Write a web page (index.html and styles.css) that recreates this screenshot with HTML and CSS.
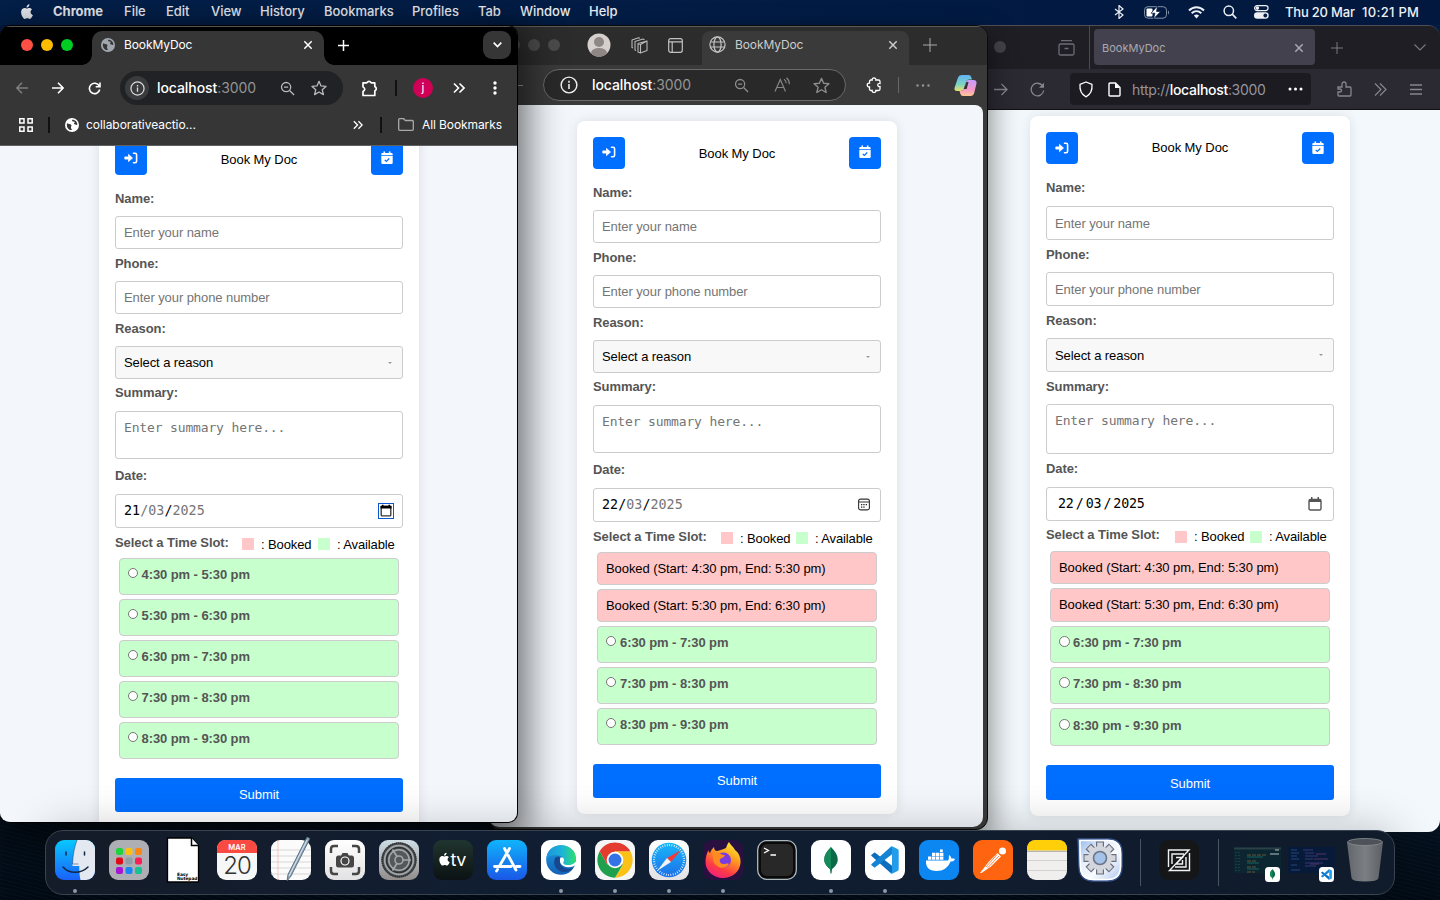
FILE: index.html
```html
<!DOCTYPE html>
<html lang="en">
<head>
<meta charset="utf-8">
<title>BookMyDoc</title>
<link rel="stylesheet" href="styles.css">
</head>
<body>
<svg class="defs" width="0" height="0">
  <defs>
    <linearGradient id="gFinder" x1="0" y1="0" x2="0" y2="1"><stop offset="0" stop-color="#08c8fd"/><stop offset="1" stop-color="#1a62fa"/></linearGradient>
    <linearGradient id="gStore" x1="0" y1="0" x2="0" y2="1"><stop offset="0" stop-color="#10b4fc"/><stop offset="1" stop-color="#1a57e6"/></linearGradient>
    <linearGradient id="gWhite" x1="0" y1="0" x2="0" y2="1"><stop offset="0" stop-color="#fff"/><stop offset="1" stop-color="#e2e2e4"/></linearGradient>
    <linearGradient id="gSettings" x1="0" y1="0" x2="0" y2="1"><stop offset="0" stop-color="#cfdde6"/><stop offset="1" stop-color="#918d8b"/></linearGradient>
    <linearGradient id="gSafari" x1="0" y1="0" x2="0" y2="1"><stop offset="0" stop-color="#19b7fa"/><stop offset="1" stop-color="#1c6fe8"/></linearGradient>
    <linearGradient id="gEdge" x1="0" y1="0" x2="1" y2="0"><stop offset="0" stop-color="#1c93dc"/><stop offset=".55" stop-color="#1db5d6"/><stop offset="1" stop-color="#2fe06a"/></linearGradient>
    <linearGradient id="gEdge2" x1="0" y1="0" x2="0" y2="1"><stop offset="0" stop-color="#1b9de0"/><stop offset="1" stop-color="#1560b8"/></linearGradient>
    <linearGradient id="gFox" x1=".8" y1="0" x2=".3" y2="1"><stop offset="0" stop-color="#fff036"/><stop offset=".4" stop-color="#ff9a1f"/><stop offset=".75" stop-color="#ff3a47"/><stop offset="1" stop-color="#f0207c"/></linearGradient>
    <linearGradient id="gTv" x1="0" y1="0" x2="0" y2="1"><stop offset="0" stop-color="#21352f"/><stop offset="1" stop-color="#0b1213"/></linearGradient>
    <linearGradient id="gTrash" x1="0" y1="0" x2="1" y2="0"><stop offset="0" stop-color="#63676c"/><stop offset=".5" stop-color="#7b7f83"/><stop offset="1" stop-color="#5c6065"/></linearGradient>
    <linearGradient id="gCopA" x1="0" y1="0" x2="0" y2="1"><stop offset="0" stop-color="#62b4f5"/><stop offset=".6" stop-color="#7dd6c0"/><stop offset="1" stop-color="#ecdf6a"/></linearGradient>
    <linearGradient id="gCopB" x1="0" y1="0" x2="0" y2="1"><stop offset="0" stop-color="#c79cff"/><stop offset=".6" stop-color="#f59ac9"/><stop offset="1" stop-color="#ffc794"/></linearGradient>
    <linearGradient id="gGear" x1="0" y1="0" x2="1" y2="1"><stop offset="0" stop-color="#8fb4ea"/><stop offset=".35" stop-color="#e8f0fc"/><stop offset=".6" stop-color="#f8fbff"/><stop offset="1" stop-color="#a9c2ee"/></linearGradient>
  </defs>
  <symbol id="apple" viewBox="0 0 14 17"><path fill="currentColor" d="M11.6 9c0-1.700 1.400-2.500 1.500-2.600-.8-1.200-2.100-1.400-2.500-1.400-1.100-.1-2.100.6-2.600.6-.6 0-1.400-.6-2.300-.6C4.500 5 3.400 5.700 2.800 6.800c-1.300 2.200-.3 5.500.9 7.300.6.9 1.300 1.900 2.300 1.800.9 0 1.300-.6 2.400-.6s1.400.6 2.400.6 1.600-.9 2.200-1.800c.7-1 1-2 1-2-.1-.1-2.400-.9-2.400-3.100zM9.800 3.600c.5-.6.8-1.400.7-2.300-.7 0-1.600.5-2.100 1.100-.5.5-.9 1.400-.8 2.200.8.1 1.700-.4 2.200-1z" transform="translate(-1.100 0)"/></symbol>
  <symbol id="x" viewBox="0 0 10 10"><path d="M1.300 1.300l7.400 7.400M8.700 1.300L1.300 8.700" stroke="currentColor" stroke-width="1.500" fill="none"/></symbol>
  <symbol id="plus" viewBox="0 0 14 14"><path d="M7 0v14M0 7h14" stroke="currentColor" fill="none"/></symbol>
  <symbol id="globe" viewBox="0 0 14 14"><circle cx="7" cy="7" r="7" fill="currentColor"/><path class="land" d="M2 5.200C3.500 6 5.400 5.600 6.300 7c.7 1.200-.6 1.500-.3 2.900.1.700.9.700.8 2.200C3.600 12.300 1.200 9.400 2 5.200zM7.200 1.700c-.5 1.500.4 1.700 1.700 1.700 1.100 0 .8 1.400.2 1.900-.5.500.3 1.400 1.300 1.200.7-.1.900.6 1.900.5C12.500 4.200 10.500 1.600 7.200 1.700z"/></symbol>
  <symbol id="dbl" viewBox="0 0 12 12"><path d="M1 1.500L5.500 6 1 10.500M6.500 1.500L11 6l-4.500 4.500" stroke="currentColor" stroke-width="1.600" fill="none"/></symbol>
  <symbol id="info" viewBox="0 0 16 16"><circle cx="8" cy="8" r="7" fill="none" stroke="currentColor" stroke-width="1.300"/><path d="M8 7v4.500M8 4.300v1.600" stroke="currentColor" stroke-width="1.400"/></symbol>
  <symbol id="zoomout" viewBox="0 0 16 16"><circle cx="6.500" cy="6.500" r="4.900" fill="none" stroke="currentColor" stroke-width="1.400"/><path d="M10.200 10.200L15 15M4.300 6.500h4.400" stroke="currentColor" stroke-width="1.400"/></symbol>
  <symbol id="star" viewBox="0 0 16 16"><path d="M8 1.300l2 4.600 5 .5-3.800 3.300 1.200 4.900L8 12l-4.400 2.600 1.200-4.900L1 6.400l5-.5z" fill="none" stroke="currentColor" stroke-width="1.300" stroke-linejoin="round"/></symbol>
  <symbol id="login" viewBox="0 0 14 12"><path fill="#fff" stroke="#fff" stroke-width=".8" stroke-linejoin="round" d="M.8 4.900h3.700V2.400L8.500 6 4.500 9.600V7.100H.8z"/><path d="M9.500 1.200h1.600Q12.600 1.200 12.600 2.700v6.600Q12.600 10.800 11.100 10.800H9.500" stroke="#fff" stroke-width="1.600" stroke-linecap="round" fill="none"/></symbol>
  <symbol id="calcheck" viewBox="0 0 12 14"><path fill="#fff" d="M2.500.5h1.600V2h3.800V.5h1.600V2h1Q11.700 2 11.700 3.200v1H.3v-1Q.3 2 1.500 2h1zM.3 5h11.400v6.800q0 1.200-1.200 1.200h-9Q.3 13 .3 11.800z"/><path d="M3.700 8.900l1.600 1.600 3-3" stroke="#006eff" stroke-width="1.200" fill="none"/></symbol>
  <symbol id="leaf" viewBox="0 0 16 28"><path fill="#0a6b48" d="M8 0c4.500 4.500 7 8.500 7 13 0 4.500-3 7.500-6 10l-.5 4.500h-1L7 23C4 20.500 1 17.500 1 13 1 8.500 3.500 4.500 8 0z"/><path fill="#178a5c" d="M8 0v23C4 20.500 1 17.500 1 13 1 8.500 3.500 4.500 8 0z"/></symbol>
  <symbol id="vs" viewBox="0 0 28 28"><path fill="#0c6fbe" d="M.6 8.700L3 6.800q.6-.4 1.200 0L21 19.700v7.800q-1 0-1.700-.8L.6 10.100q-.8-.7 0-1.400z"/><path fill="#1383d3" d="M.6 19.300L3 21.200q.6.400 1.200 0L21 8.300V.5q-1 0-1.700.8L.6 17.900q-.8.700 0 1.400z"/><path fill="#239cec" d="M19.300 1.300Q20.200.100 21.600.6l5 2.400q1.100.6 1.100 1.800v18.400q0 1.200-1.100 1.800l-5 2.400q-1.400.5-2.300-.7.900.5 1.700-.9V2.200q-.8-1.400-1.700-.9z"/></symbol>
</svg>

<div class="desktop">
  <header class="menubar">
    <div class="menus">
      <svg class="apple" width="14" height="17"><use href="#apple"/></svg>
      <b>Chrome</b><span>File</span><span>Edit</span><span>View</span><span>History</span><span>Bookmarks</span><span>Profiles</span><span>Tab</span><span>Window</span><span>Help</span>
    </div>
    <div class="status">
      <svg width="10" height="14" viewBox="0 0 10 14"><path d="M1 4l8 6-4 3.500V.5L9 4l-8 6" fill="none" stroke="currentColor" stroke-width="1.200"/></svg>
      <svg width="26" height="13" viewBox="0 0 26 13"><rect x=".5" y=".7" width="22" height="11.500" rx="3.500" fill="none" stroke="#8291a8"/><path d="M24 4.500c1.400.5 1.400 3.500 0 4z" fill="#8291a8"/><rect x="2.500" y="2.500" width="6" height="8" rx="1" fill="#fff"/><path d="M13.500 0L7 7.200h4L9.500 13l7-7.500h-4z" fill="#fff" stroke="#021b43" stroke-width=".7"/></svg>
      <svg width="17" height="13" viewBox="0 0 17 13"><path d="M1 4.500c4.300-4.300 10.700-4.300 15 0M3.700 7.300c2.800-2.700 6.800-2.700 9.600 0" fill="none" stroke="currentColor" stroke-width="2"/><path d="M5.900 9.400c1.500-1.300 3.700-1.300 5.200 0L8.500 12.500z" fill="currentColor"/></svg>
      <svg width="14" height="14" viewBox="0 0 14 14"><circle cx="5.800" cy="5.800" r="4.700" fill="none" stroke="currentColor" stroke-width="1.500"/><path d="M9.200 9.200L13.300 13.300" stroke="currentColor" stroke-width="1.700"/></svg>
      <svg width="15" height="14" viewBox="0 0 15 14"><rect x=".6" y=".6" width="13.500" height="5" rx="2.500" fill="none" stroke="currentColor" stroke-width="1.200"/><circle cx="3.400" cy="3.100" r="1.800" fill="currentColor"/><rect x="0" y="7.300" width="14.700" height="6.500" rx="3.200" fill="currentColor"/><circle cx="11.300" cy="10.500" r="1.900" fill="#0a1f45"/></svg>
      <span class="day">Thu 20 Mar</span><span class="time">10:21 PM</span>
    </div>
  </header>

  <!-- Firefox -->
  <section class="window firefox">
    <div class="ff-tabs">
      <span class="light"></span>
      <svg class="ff-archive" width="17" height="16" viewBox="0 0 17 16"><path d="M3 .7h11M2.500 4h12Q16 4 16 5.500v8q0 1.500-1.500 1.500h-12Q1 15 1 13.500v-8Q1 4 2.500 4zM6.500 8.500h4" fill="none" stroke="#6e6b76" stroke-width="1.300"/></svg>
      <div class="ff-tab"><span>BookMyDoc</span><svg width="10" height="10"><use href="#x"/></svg></div>
      <svg class="ff-plus" width="12" height="12"><use href="#plus"/></svg>
      <svg class="ff-chev" width="12" height="7" viewBox="0 0 12 7"><path d="M.5.500L6 6 11.500.500" fill="none" stroke="#77747f" stroke-width="1.200"/></svg>
    </div>
    <div class="ff-bar">
      <svg class="ff-fwd" width="14" height="13" viewBox="0 0 14 13"><path d="M0 6.500h13M7.500 1L13 6.500 7.500 12" fill="none" stroke="currentColor" stroke-width="1.300"/></svg>
      <svg class="ff-reload" width="15" height="15" viewBox="0 0 15 15"><path d="M12.700 4A6.300 6.300 0 1 0 13.700 8.500" fill="none" stroke="currentColor" stroke-width="1.300"/><path d="M14 .8v5H9z" fill="currentColor"/></svg>
      <div class="ff-url">
        <svg width="16" height="17" viewBox="0 0 16 17"><path d="M8 1l6 2.300c.5 6-1.500 10.200-6 12.500C3.500 13.500 1.500 9.300 2 3.300z" fill="none" stroke="#fff" stroke-width="1.300" stroke-linejoin="round"/></svg>
        <svg class="ff-page" width="13" height="15" viewBox="0 0 13 15"><path d="M1 2Q1 1 2 1h5.500L12 5.500V13q0 1-1 1H2q-1 0-1-1z" fill="none" stroke="#fff" stroke-width="1.400"/><path d="M7 1v5h5z" fill="#fff"/></svg>
        <span class="ff-addr">http://<b>localhost</b>:3000</span>
        <svg width="15" height="4" viewBox="0 0 15 4"><path d="M2 2h.01M7.500 2h.01M13 2h.01" stroke="#fff" stroke-width="3" stroke-linecap="round"/></svg>
      </div>
      <svg class="ff-ext" width="15" height="16" viewBox="0 0 15 16"><path d="M2 15q-1 0-1-1v-3h2c2 0 2-3 0-3H1V6h4V3c0-2.700 4-2.700 4 0v3h4q1 0 1 1v7q0 1-1 1z" fill="none" stroke="currentColor" stroke-width="1.300"/></svg>
      <svg class="ff-more" width="13" height="13" viewBox="0 0 13 13"><path d="M1 .500l6 6-6 6M6 .500l6 6-6 6" fill="none" stroke="currentColor" stroke-width="1.200"/></svg>
      <svg class="ff-menu" width="12" height="11" viewBox="0 0 12 11"><path d="M0 1h12M0 5.500h12M0 10h12" stroke="currentColor" stroke-width="1.300"/></svg>
    </div>
    <main class="page">
      <form class="card">
        <div class="head"><span class="btn"><svg width="14" height="12"><use href="#login"/></svg></span><span class="title">Book My Doc</span><span class="btn"><svg width="12" height="14"><use href="#calcheck"/></svg></span></div>
        <label class="first">Name:</label><div class="field">Enter your name</div>
        <label>Phone:</label><div class="field">Enter your phone number</div>
        <label>Reason:</label><div class="field select"><span>Select a reason</span><i></i></div>
        <label>Summary:</label><div class="field area">Enter summary here...</div>
        <label class="dlabel">Date:</label><div class="field date"><span><b>22</b><b>/</b><b>03</b><b>/</b><b>2025</b></span><svg width="14" height="14" viewBox="0 0 14 14"><path d="M2.500 2.500h9q1.500 0 1.500 1.500v7.500q0 1.500-1.500 1.500h-9Q1 13 1 11.500V4q0-1.500 1.500-1.500z" fill="none" stroke="#555" stroke-width="1.400"/><path d="M1 2.500h12v2.500H1zM3 0h1.500v3H3zM9.500 0H11v3H9.500z" fill="#555"/></svg></div>
        <div class="legend"><strong>Select a Time Slot:</strong><i class="red"></i><span class="lb">: Booked</span><i class="green"></i><span>: Available</span></div>
        <div class="slots"><div class="slot booked">Booked (Start: 4:30 pm, End: 5:30 pm)</div><div class="slot booked">Booked (Start: 5:30 pm, End: 6:30 pm)</div><div class="slot"><i></i>6:30 pm - 7:30 pm</div><div class="slot"><i></i>7:30 pm - 8:30 pm</div><div class="slot last"><i></i>8:30 pm - 9:30 pm</div></div>
        <div class="submit">Submit</div>
      </form>
    </main>
  </section>

  <!-- Edge -->
  <section class="window edge">
    <div class="ed-tabs">
      <span class="light"></span><span class="light"></span><span class="light"></span>
      <svg class="ed-user" width="24" height="24" viewBox="0 0 24 24"><clipPath id="uc"><circle cx="12" cy="12" r="11.500"/></clipPath><g clip-path="url(#uc)"><rect width="24" height="24" fill="#d5d0cd"/><circle cx="12" cy="9" r="5" fill="#8e8783"/><ellipse cx="12" cy="20" rx="8" ry="5" fill="#8e8783"/></g></svg>
      <svg class="ed-coll" width="17" height="17" viewBox="0 0 17 17"><path d="M7 6.500l9-2.500v9.500L9.500 16 7 15zM7 6.500l2.500 1L16 4M9.500 7.500V16M5 13.500l-1-.5V4.500l8-2.500 1.500.8M2 11l-1-.5V3L7.500.700 9 1.200" fill="none" stroke="#b8b8b8" stroke-width="1.100" stroke-linejoin="round"/></svg>
      <svg class="ed-side" width="15" height="15" viewBox="0 0 15 15"><rect x=".7" y=".7" width="13.600" height="13.600" rx="2" fill="none" stroke="#c2c2c2" stroke-width="1.200"/><path d="M.7 3.800h13.600M4.200 3.800v10.500" stroke="#c2c2c2" stroke-width="1.200"/></svg>
      <div class="ed-tab">
        <svg width="17" height="17" viewBox="0 0 17 17"><g fill="none" stroke="#c4c4c4" stroke-width="1.200"><circle cx="8.500" cy="8.500" r="7.600"/><ellipse cx="8.500" cy="8.500" rx="3.600" ry="7.600"/><path d="M1.500 6h14M1.500 11h14"/></g></svg>
        <span>BookMyDoc</span><svg width="10" height="10"><use href="#x"/></svg>
      </div>
      <svg class="ed-plus" width="14" height="14"><use href="#plus"/></svg>
    </div>
    <div class="ed-bar">
      <i class="ed-arrow"></i>
      <div class="ed-url">
        <svg width="18" height="18"><use href="#info"/></svg>
        <span class="addr"><b>localhost</b>:3000</span>
        <svg class="ez" width="15" height="15"><use href="#zoomout"/></svg>
        <svg width="17" height="16" viewBox="0 0 17 16"><path d="M1 14.500L6.300 2.500l5.200 12M3 10.500h6.700M10 2.200c1.600 1 2.200 2.300 2.200 4M12.500.7c2 1.700 2.900 3.700 2.800 6.500" fill="none" stroke="#858585" stroke-width="1.200"/></svg>
        <svg width="17" height="17"><use href="#star"/></svg>
      </div>
      <svg class="ed-ext" width="16" height="16" viewBox="0 0 16 16"><path d="M4 3h2.200c-.6-2.800 4.200-2.800 3.600 0H12.500q1.500 0 1.500 1.500V6.500c-3-.6-3 3.600 0 3v2.500q0 1.500-1.500 1.500H9.800c.6 2.600-4.200 2.600-3.600 0H5Q3.500 13.500 3.500 12V9.800c-3 .6-3-4.200 0-3.600V4.500Q3.500 3 5 3z" fill="none" stroke="#fff" stroke-width="1.300"/></svg>
      <i class="ed-sep"></i>
      <svg class="ed-dots" width="14" height="3" viewBox="0 0 14 3"><path d="M1.500 1.500h.01M7 1.500h.01M12.500 1.500h.01" stroke="#939393" stroke-width="2.500" stroke-linecap="round"/></svg>
      <svg class="ed-cop" width="23" height="21" viewBox="0 0 23 21"><path fill="url(#gCopA)" d="M4 2.500Q4.800 0 7.500 0h7Q16.700 0 17.300 2.200l.7 2.300H15q-2.300 0-3 2.300L10 13.500Q9 16 6.500 16H3Q0 16 .5 13z"/><path fill="url(#gCopB)" d="M14 5h5.500q3.500 0 3 3.500l-2.300 9.500q-.9 3-3.700 3H9Q7 21 6.300 18.800L5.500 16h1q2.500 0 3.400-2.500L12 7q.6-2 2-2z"/><path fill="#343434" d="M12.500 7h2l-1.800 7H9.700z"/></svg>
    </div>
    <main class="page">
      <form class="card">
        <div class="head"><span class="btn"><svg width="14" height="12"><use href="#login"/></svg></span><span class="title">Book My Doc</span><span class="btn"><svg width="12" height="14"><use href="#calcheck"/></svg></span></div>
        <label class="first">Name:</label><div class="field">Enter your name</div>
        <label>Phone:</label><div class="field">Enter your phone number</div>
        <label>Reason:</label><div class="field select"><span>Select a reason</span><i></i></div>
        <label class="sum">Summary:</label><div class="field area">Enter summary here...</div>
        <label class="dlabel">Date:</label><div class="field date"><span><b>22/</b>03<b>/</b>2025</span><svg width="16" height="16" viewBox="0 0 16 16"><rect x="2.600" y="2.100" width="10.800" height="10.800" rx="2" fill="none" stroke="#333" stroke-width="1.100"/><path d="M2.600 5h10.800" stroke="#333"/><path d="M5 7.700h1.300M7.300 7.700h1.300M9.700 7.700H11M5 10.200h1.300M7.300 10.200h1.300" stroke="#222" stroke-width="1.200"/></svg></div>
        <div class="legend"><strong>Select a Time Slot:</strong><i class="red"></i><span class="lb">: Booked</span><i class="green"></i><span>: Available</span></div>
        <div class="slots"><div class="slot booked">Booked (Start: 4:30 pm, End: 5:30 pm)</div><div class="slot booked">Booked (Start: 5:30 pm, End: 6:30 pm)</div><div class="slot"><i></i>6:30 pm - 7:30 pm</div><div class="slot"><i></i>7:30 pm - 8:30 pm</div><div class="slot"><i></i>8:30 pm - 9:30 pm</div></div>
        <div class="submit">Submit</div>
      </form>
    </main>
  </section>

  <!-- Chrome -->
  <section class="window chrome">
    <div class="ch-tabs">
      <span class="light r"></span><span class="light y"></span><span class="light g"></span>
      <div class="ch-tab"><svg class="fav" width="14" height="14"><use href="#globe"/></svg><span>BookMyDoc</span><svg width="10" height="10"><use href="#x"/></svg></div>
      <svg class="ch-plus" width="11" height="11" viewBox="0 0 11 11"><path d="M5.500 0v11M0 5.500h11" stroke="#fff" stroke-width="1.500"/></svg>
      <span class="ch-drop"><svg width="9" height="6" viewBox="0 0 9 6"><path d="M.7.700l3.800 3.800L8.300.700" fill="none" stroke="#fff" stroke-width="1.700"/></svg></span>
    </div>
    <div class="ch-bar">
      <span class="cell"><svg class="dim" width="12" height="12" viewBox="0 0 12 12"><path d="M12 6H1M6 .800L.900 6 6 11.200" fill="none" stroke="currentColor" stroke-width="1.500"/></svg></span>
      <span class="cell"><svg width="12" height="12" viewBox="0 0 12 12"><path d="M0 6h11M6 .800L11.100 6 6 11.200" fill="none" stroke="currentColor" stroke-width="1.600"/></svg></span>
      <span class="cell"><svg width="13" height="13" viewBox="0 0 13 13"><path d="M11.200 4A5.200 5.200 0 1 0 11.700 7.500M12 .500v4.300H7.700" fill="none" stroke="currentColor" stroke-width="1.600"/></svg></span>
      <div class="ch-url">
        <span class="ch-info"><svg width="15" height="15"><use href="#info"/></svg></span>
        <span class="addr"><b>localhost</b>:3000</span>
        <svg width="15" height="15"><use href="#zoomout"/></svg>
        <svg class="cs" width="16" height="16"><use href="#star"/></svg>
      </div>
      <span class="cell wide"><svg width="17" height="17" viewBox="0 0 17 17"><path d="M2 2.800h3.800Q8 0 10.200 2.800h3.600V6.500q3 2 0 4.500V15.500H2V11.500q3.500-2.300 0-4.600z" fill="none" stroke="currentColor" stroke-width="1.700" stroke-linejoin="round"/></svg></span>
      <i class="ch-sep"></i>
      <span class="cell wide"><span class="ava">j</span></span>
      <svg class="ch-more" width="12" height="12"><use href="#dbl"/></svg>
      <svg class="ch-kebab" width="4" height="14" viewBox="0 0 4 14"><path d="M2 2v.01M2 7v.01M2 12v.01" stroke="#fff" stroke-width="3.400" stroke-linecap="round"/></svg>
    </div>
    <div class="ch-marks">
      <svg width="14" height="14" viewBox="0 0 14 14"><path d="M.8.800h4.200v4.200h-4.200zM9 .8h4.200v4.200H9zM.8 9h4.200v4.200h-4.200zM9 9h4.200v4.200H9z" fill="none" stroke="#fff" stroke-width="1.500"/></svg>
      <i class="ch-sep m1"></i>
      <svg class="m2" width="14" height="14"><use href="#globe"/></svg>
      <span class="m3">collaborativeactio...</span>
      <svg class="m4" width="10" height="10"><use href="#dbl"/></svg>
      <i class="ch-sep m5"></i>
      <svg class="m6" width="16" height="13" viewBox="0 0 16 13"><path d="M.7 1.700Q.7.700 1.700.7h4l1.600 1.800h7q1 0 1 1v7.800q0 1-1 1H1.700q-1 0-1-1z" fill="none" stroke="#a9a9a9" stroke-width="1.300"/></svg>
      <span class="m7">All Bookmarks</span>
    </div>
    <main class="page">
      <form class="card">
        <div class="head"><span class="btn"><svg width="14" height="12"><use href="#login"/></svg></span><span class="title">Book My Doc</span><span class="btn"><svg width="12" height="14"><use href="#calcheck"/></svg></span></div>
        <label class="first">Name:</label><div class="field">Enter your name</div>
        <label>Phone:</label><div class="field">Enter your phone number</div>
        <label>Reason:</label><div class="field select"><span>Select a reason</span><i></i></div>
        <label class="sum">Summary:</label><div class="field area">Enter summary here...</div>
        <label class="dlabel">Date:</label><div class="field date"><span><b>21</b>/03<b>/</b>2025</span><svg class="focus" width="16" height="16" viewBox="0 0 16 16"><rect x="3.200" y="3.500" width="9.600" height="9.300" rx=".5" fill="none" stroke="#333" stroke-width="1.300"/><path d="M2.500 2.700h11V5.600h-11zM4 1.700h1.500V3H4zM10.500 1.700H12V3h-1.500z" fill="#000"/></svg></div>
        <div class="legend"><strong>Select a Time Slot:</strong><i class="red"></i><span class="lb">: Booked</span><i class="green"></i><span>: Available</span></div>
        <div class="slots"><div class="slot"><i></i>4:30 pm - 5:30 pm</div><div class="slot"><i></i>5:30 pm - 6:30 pm</div><div class="slot"><i></i>6:30 pm - 7:30 pm</div><div class="slot"><i></i>7:30 pm - 8:30 pm</div><div class="slot"><i></i>8:30 pm - 9:30 pm</div></div>
        <div class="submit">Submit</div>
      </form>
    </main>
  </section>

  <footer class="dock">
    <span class="app on"><svg width="40" height="40" viewBox="0 0 40 40"><clipPath id="rc"><rect width="40" height="40" rx="9"/></clipPath><g clip-path="url(#rc)"><rect width="40" height="40" fill="url(#gFinder)"/><path d="M22 0h18v40H25.500c-1-5-1.300-9-1.200-14H17.500C17.800 15 19.500 7 22 0z" fill="#e4e8f0"/></g><path d="M22 0C19.500 7 17.800 15 17.500 24h6" fill="none" stroke="#1b3b63" stroke-width=".5"/><path d="M11 12v3M29.500 12v3M8 27c6 7 18 7 25 0" fill="none" stroke="#122744" stroke-width="1.500" stroke-linecap="round"/></svg></span>
    <span class="app"><svg width="40" height="40" viewBox="0 0 40 40"><rect width="40" height="40" rx="9" fill="#adafb4"/><g><rect x="7" y="8" width="7" height="7" rx="2" fill="#1fd33c"/><rect x="16.500" y="8" width="7" height="7" rx="2" fill="#fdc010"/><rect x="26" y="8" width="7" height="7" rx="2" fill="#fb8712"/><rect x="7" y="17.500" width="7" height="7" rx="2" fill="#e00b18"/><rect x="16.500" y="17.500" width="7" height="7" rx="2" fill="#8f9da6"/><rect x="26" y="17.500" width="7" height="7" rx="2" fill="#fb1f55"/><rect x="7" y="27" width="7" height="7" rx="2" fill="#a616d2"/><rect x="16.500" y="27" width="7" height="7" rx="2" fill="#1787f5"/><rect x="26" y="27" width="7" height="7" rx="2" fill="#16c193"/></g></svg></span>
    <span class="app"><svg width="40" height="46" viewBox="0 0 40 46"><path d="M4.500 1h24l7 7.500V45h-31z" fill="#fff" stroke="#000" stroke-width="1.300"/><path d="M28.500 1v7.500h7" fill="#fff" stroke="#000" stroke-width="1.500"/><text x="14" y="38.500" class="np">Easy</text><text x="14" y="43.200" class="np">Notepad</text></svg></span>
    <span class="app"><svg width="40" height="40" viewBox="0 0 40 40"><rect width="40" height="40" rx="9" fill="#f7f7f7"/><path d="M0 13V9Q0 0 9 0h22q9 0 9 9v4z" fill="#fb4a41"/><text x="20" y="10" text-anchor="middle" class="mar">MAR</text><text x="20" y="34" text-anchor="middle" class="twenty">20</text></svg></span>
    <span class="app"><svg width="40" height="48" viewBox="0 0 40 48"><rect y="4" width="40" height="40" rx="9" fill="#fbfbfb"/><path d="M0 14h40M0 20h40M0 26h40M0 32h40M0 38h40" stroke="#cfcfcf" stroke-width=".8"/><path d="M7 4v40" stroke="#f3b1ae" stroke-width=".7"/><path d="M36 1l3 1.500-19 37.500-4 5 1-6.500z" fill="#8fa9bd" stroke="#47586a" stroke-width=".8"/><path d="M36 4L18 40" stroke="#e8f2f9" stroke-width=".9"/></svg></span>
    <span class="app"><svg width="40" height="40" viewBox="0 0 40 40"><rect width="40" height="40" rx="9" fill="url(#gWhite)"/><path d="M6 13V9q0-3 3-3h4M27 6h4q3 0 3 3v4M34 27v4q0 3-3 3h-4M13 34H9q-3 0-3-3v-4" fill="none" stroke="#464646" stroke-width="2.500"/><rect x="11" y="15.500" width="18" height="12" rx="2.500" fill="#464646"/><path d="M16 16l1.500-3h5l1.500 3z" fill="#464646"/><circle cx="20" cy="21" r="4" fill="#464646" stroke="#fff" stroke-width="1.200"/></svg></span>
    <span class="app"><svg width="40" height="40" viewBox="0 0 40 40"><rect width="40" height="40" rx="9" fill="url(#gSettings)"/><circle cx="20" cy="20" r="17.500" fill="#55585a"/><g fill="none" stroke="#2f3235"><circle cx="20" cy="20" r="16.800" stroke-width="1.800" stroke-dasharray="1.500 .6"/><circle cx="20" cy="20" r="12.500" stroke-width="1.500"/></g><g fill="none" stroke="#a4a7a9"><circle cx="20" cy="20" r="14.300" stroke-width="1.700"/><circle cx="20" cy="20" r="10.200" stroke-width="1.500"/><circle cx="20" cy="20" r="4" stroke-width="1.600"/><path d="M24 20h8M18 23.500l-4.500 7M18 16.500l-4.500-7" stroke-width="1.700"/></g></svg></span>
    <span class="app"><svg width="40" height="40" viewBox="0 0 40 40"><rect width="40" height="40" rx="9" fill="url(#gTv)"/><svg class="w" x="5" y="11.500" width="13" height="15"><use href="#apple"/></svg><text x="17.500" y="26" class="tv">tv</text></svg></span>
    <span class="app"><svg width="40" height="40" viewBox="0 0 40 40"><rect width="40" height="40" rx="9" fill="url(#gStore)"/><path d="M17.500 8.500l11.500 21.500M22.500 8.500L12.500 26M7.500 26.500H24M29.500 26.500H33M10.500 29.500l-1 1.500" stroke="#fff" stroke-width="2.800" stroke-linecap="round"/></svg></span>
    <span class="app on"><svg width="40" height="40" viewBox="0 0 40 40"><rect width="40" height="40" rx="9" fill="#fff"/><circle cx="20" cy="20" r="14.800" fill="url(#gEdge2)"/><path d="M5.300 19C6 10 12 5.200 20 5.200c9 0 15 6 15 13 0 5-4 7.500-8.500 7.500-3.500 0-5.500-1.500-4-3.500 1.500-2.500 0-6-4-6.700C13 14.500 7 15.500 5.300 19z" fill="url(#gEdge)"/><path d="M14 18c-3 7 2 15 11 14 3-.3 6-2 7.500-4.500C27 30.500 18 28 19 20c.2-2-.3-3-1-3.500-1.500 0-3 .500-4 1.500z" fill="#17478f"/><path d="M19.500 17.500c-2 5 1 9.500 8 9.700 3 0 6-1 9-3.500l-2-2c-2 3-7 4.200-11 2.800-1-.6-1.500-1.500-1-2.500 1-1.500.5-3.500-.5-4.500z" fill="#fff"/></svg></span>
    <span class="app on"><svg width="40" height="40" viewBox="0 0 40 40"><rect width="40" height="40" rx="9" fill="#f5f5f5"/><path d="M20 37.700A17.700 17.700 0 0 0 35.300 11.200H20l7.700 13.200z" fill="#fbc116"/><path d="M4.700 11.200A17.700 17.700 0 0 0 20 37.700l7.700-13.300L20 20l-7.700 4.400z" fill="#1fa04d"/><path d="M4.700 11.200A17.700 17.700 0 0 1 35.300 11.200H20l-7.700 13.200z" fill="#e33b2e"/><circle cx="20" cy="20" r="8.300" fill="#fff"/><circle cx="20" cy="20" r="6.500" fill="#3273e6"/></svg></span>
    <span class="app on"><svg width="40" height="40" viewBox="0 0 40 40"><rect width="40" height="40" rx="9" fill="url(#gWhite)"/><circle cx="20" cy="20" r="17.300" fill="url(#gSafari)"/><circle cx="20" cy="20" r="15" fill="none" stroke="#fff" stroke-width="2.200" stroke-dasharray=".7 1.650"/><path d="M32 10L22 22l-4-4z" fill="#f33a35"/><path d="M8 31l10-13 4 4z" fill="#f2f2f2"/></svg></span>
    <span class="app on"><svg width="40" height="40" viewBox="0 0 40 40"><rect width="40" height="40" rx="9" fill="#2a1040"/><path d="M23 8c1-3 2-5 3-6 1 3 5 5 6 8 4 3 6 8 5.500 13-.7 8.500-8 15-17.500 15S2.500 31 2.500 22c0-5 1.500-9 3-12 0 1.500.5 2.500 1.500 3 1-3 3-5 4-6 0 2 1 4 3 4 4-1 7-2 9-3z" fill="url(#gFox)"/><circle cx="20.500" cy="20" r="7.500" fill="#7b3be0"/><path d="M9 14c3-1 6-1 9 0 1.500 1 3 1 4 1-1 3-4 3-5 4-1 3 1 5 4 5 2 0 3-1 5 0-2 4-8 5-12 2-3-2-4-5-4-8z" fill="#ff8a22"/></svg></span>
    <span class="app"><svg width="40" height="40" viewBox="0 0 40 40"><rect x=".7" y=".7" width="38.600" height="38.600" rx="9" fill="#0a0a0a" stroke="#aebabd" stroke-width="1.300"/><rect x="4" y="4" width="32" height="32" rx="6" fill="#282828"/><path d="M7 8l4.500 2.500L7 13M13.500 15h5.500" fill="none" stroke="#fff" stroke-width="1.300"/></svg></span>
    <span class="app on"><svg width="40" height="40" viewBox="0 0 40 40"><rect width="40" height="40" rx="9" fill="#fff"/><svg x="12" y="7" width="16" height="27"><use href="#leaf"/></svg></svg></span>
    <span class="app on"><svg width="40" height="40" viewBox="0 0 40 40"><rect width="40" height="40" rx="9" fill="#fff"/><svg x="6" y="6" width="28" height="28"><use href="#vs"/></svg></svg></span>
    <span class="app"><svg width="40" height="40" viewBox="0 0 40 40"><rect width="40" height="40" rx="9" fill="#0c87f2"/><path d="M7 20.500h22c1.500-1.500.5-4 1-5.500 1.500 1 2 2 2.500 3.500 1 0 2.500-.2 3.500.5-1 2.500-3 2.500-4.500 2.500C29 28 24 31 17.500 31 10 31 6.500 27 7 20.500z" fill="#fff"/><path d="M9 16.500h3.400v3.200H9zM13 16.500h3.400v3.200H13zM17 16.500h3.400v3.200H17zM21 16.500h3.400v3.200H21zM13 12.800h3.400V16H13zM17 12.800h3.400V16H17zM21 12.800h3.400V16H21zM21 9.500h2.800v2.600H21z" fill="#fff"/></svg></span>
    <span class="app"><svg width="40" height="40" viewBox="0 0 40 40"><rect width="40" height="40" rx="9" fill="#ff6510"/><circle cx="29.500" cy="11" r="3.500" fill="#fff"/><path d="M24.500 13l3.500 3.500-10 10-9.500 6.500h-1.500l8.500-11z" fill="#fff"/><path d="M24 14.500L13 27M26 16L14.500 28" stroke="#ff6510" stroke-width=".8"/></svg></span>
    <span class="app"><svg width="40" height="40" viewBox="0 0 40 40"><rect width="40" height="40" rx="9" fill="#f0efed"/><path d="M0 10.500V9Q0 0 9 0h22q9 0 9 9v1.500z" fill="#ffcf0a"/><path d="M0 11.300h40" stroke="#b9b5aa" stroke-width="1.200"/><path d="M0 20.500h40M0 30.500h40" stroke="#cbcac8" stroke-width=".8"/></svg></span>
    <span class="app gear"><svg width="46" height="44" viewBox="0 0 46 44"><path d="M1 1h30q14 0 14 14v13q0 15-15 15H17Q2 43 2 28z" fill="url(#gGear)" stroke="#38568f" stroke-width="1.300"/><path d="M3 2.500h28q12.500 0 12.500 13V28q0 13.500-13.500 13.500H17Q3.500 41.500 3.500 28z" fill="none" stroke="#fff" stroke-width="1.500"/><g transform="translate(23 20)"><g stroke="#696e7a" stroke-width="8"><path d="M0-16.500v33M-16.500 0h33M-11.700-11.700l23.400 23.400M11.700-11.700l-23.400 23.400"/></g><g stroke="#d3d6dd" stroke-width="5.600"><path d="M0-15.500v31M-15.500 0h31M-11-11l22 22M11-11l-22 22"/></g><circle r="12" fill="#d3d6dd"/><circle r="6.500" fill="#a5c3ea" stroke="#6c7586" stroke-width="1.600"/></g></svg></span>
    <i class="dsep s1"></i>
    <span class="app zed"><svg width="40" height="40" viewBox="0 0 40 40"><rect width="40" height="40" rx="9" fill="#151617"/><g fill="none" stroke="#f2f2f2" stroke-width="1.400"><path d="M9.500 27V10H30L10.500 30.500H30.500V13M13 24V14h12M27 17v10H16M17 17.500h6.500L17 24h6.500v-4"/></g></svg></span>
    <i class="dsep s2"></i>
    <span class="mini"><svg width="48" height="36" viewBox="0 0 48 36"><rect y="1" width="47" height="26" fill="#0b2631"/><path d="M0 2.500h47" stroke="#2b4047" stroke-width="2"/><path d="M2 6v19M5 6v19" stroke="#2b515a" stroke-dasharray="1 2"/><path d="M13 9h20M13 15h10M13 21h10M13 26h8" stroke="#62563c" stroke-dasharray="4 1"/><path d="M13 11h16M13 17h12M13 23h12" stroke="#1d6561"/><path d="M36 8h9M41 4h4" stroke="#b4c4c7"/><rect x="31" y="21" width="15" height="15" rx="3.500" fill="#fff"/><svg x="35.500" y="23" width="6" height="11"><use href="#leaf"/></svg></svg></span>
    <span class="mini"><svg width="48" height="36" viewBox="0 0 48 36"><rect y="1" width="47" height="26" fill="#071a3a"/><path d="M3 4h6M3 7h8M3 10h6M3 13h8M3 19h6M3 24h9" stroke="#24497c"/><path d="M15 4h10M17 7h9M17 10h13M17 13h8M17 17h18M17 20h11" stroke="#353b77"/><path d="M28 8h10M26 13h14M22 18h9" stroke="#573068"/><rect x="31" y="21" width="15" height="15" rx="3.500" fill="#fff"/><svg x="33" y="23" width="11" height="11"><use href="#vs"/></svg></svg></span>
    <span class="trash"><svg width="36" height="44" viewBox="0 0 36 44"><path d="M0 4l4.500 36q.5 3.500 13.500 3.500t13.500-3.500L36 4z" fill="url(#gTrash)"/><ellipse cx="18" cy="4" rx="17.500" ry="3.500" fill="#4c5258" stroke="#8c9196" stroke-width=".8"/></svg></span>
  </footer>
</div>
</body>
</html>
```
FILE: styles.css
```css
* { box-sizing: border-box; }
body { margin: 0; width: 1440px; height: 900px; overflow: hidden; font-family: Inter, "Noto Sans", sans-serif; }
svg { display: block; flex: none; }
.defs { position: absolute; }
.desktop { position: relative; width: 1440px; height: 900px; overflow: hidden; background: repeating-linear-gradient(14deg, #ffffff05 0 1px, transparent 1px 4px), linear-gradient(#021b43 0 30px, #04111f 820px, #020b15); }

/* Menu bar */
.menubar { height: 25px; display: flex; justify-content: space-between; background: linear-gradient(90deg, #03204b, #02183e); color: #eceff4; font-size: 13px; font-weight: 500; line-height: 23px; white-space: nowrap; }
.menus { display: grid; grid-template-columns: 33px 71px 42px 45px 49px 64px 88px 66px 42px 69px 40px; padding-left: 20px; letter-spacing: -.03px; }
.menus b { font-weight: 700; }
.apple { margin-top: 3px; }
.status { display: flex; align-items: center; width: 326px; padding-bottom: 1px; }
.status svg:nth-child(2) { margin-left: 20px; }
.status svg:nth-child(3) { margin-left: 18px; }
.status svg:nth-child(4) { margin-left: 18px; }
.status svg:nth-child(5) { margin-left: 17px; }
.day { margin-left: 16px; width: 77px; letter-spacing: -.2px; }
.time { letter-spacing: .3px; }

/* Windows */
.window { position: absolute; top: 25px; overflow: hidden; display: flex; flex-direction: column; }
.light { width: 12px; height: 12px; border-radius: 50%; background: #4b4b4b; flex: none; }
.page { flex: 1; min-height: 0; overflow: hidden; background: #f3f7fc; }
.addr { font-size: 14px; color: #949494; letter-spacing: -.07px; white-space: nowrap; padding-bottom: 1px; }
.addr b { color: #fff; font-weight: 500; }

/* Chrome */
.chrome { left: 0; width: 518px; height: 798px; border-radius: 10px; border: 1px solid #000; border-left: 0; box-shadow: 0 12px 38px 8px #0009; background: #363636; color: #fff; font-size: 12px; }
.ch-tabs { height: 39px; background: #000; display: flex; align-items: center; padding: 0 0 1px 21px; box-shadow: inset 0 1px #555; }
.ch-tabs .light { margin-right: 8px; }
.light.r { background: #ff4f44; } .light.y { background: #ffbd02; } .light.g { background: #00ce23; }
.ch-tab { position: relative; margin: 0 0 -1px 11px; width: 232px; height: 34px; align-self: flex-end; border-radius: 10px 10px 0 0; background: #363636; display: flex; align-items: center; padding: 0 11px 7px 9px; }
.ch-tab::before, .ch-tab::after { content: ""; position: absolute; bottom: 0; width: 10px; height: 10px; }
.ch-tab::before { left: -10px; background: radial-gradient(circle at 0 0, transparent 9.5px, #363636 10px); }
.ch-tab::after { right: -10px; background: radial-gradient(circle at 100% 0, transparent 9.5px, #363636 10px); }
.ch-tab span { margin-left: 9px; flex: 1; letter-spacing: -.1px; }
.fav { color: #a0a7ae; }
.land { fill: #363636; }
.ch-plus { margin-left: 14px; }
.ch-drop { margin-left: auto; margin-right: 6px; width: 28px; height: 28px; border-radius: 9px; background: #363636; display: grid; place-items: center; }
.ch-bar { height: 46px; display: flex; align-items: center; padding-left: 4px; }
.cell { width: 36px; display: grid; place-items: center; flex: none; }
.cell.wide { width: 52px; }
.dim { color: #7e7e7e; }
.ch-url { margin-left: 8px; width: 223px; height: 34px; border-radius: 17px; background: #212225; display: flex; align-items: center; padding-left: 5px; color: #b9b9b9; }
.ch-info { width: 24px; height: 24px; border-radius: 50%; background: #3a3b3d; display: grid; place-items: center; color: #ddd; }
.ch-url .addr { margin-left: 8px; width: 123px; }
.cs { margin-left: 16px; }
.ch-sep { width: 2px; height: 16px; background: #111; flex: none; }
.ava { width: 20px; height: 20px; border-radius: 50%; background: #cf0056; font-size: 12px; line-height: 19px; text-align: center; }
.ch-more { margin-left: 4px; }
.ch-kebab { margin-left: 28px; }
.ch-marks { height: 35px; display: flex; align-items: center; padding: 0 15px 7px 19px; border-bottom: 1px solid #606060; }
.m1 { margin-left: 15px; } .m2 { margin-left: 15px; } .m3 { margin-left: 7px; width: 267px; white-space: nowrap; letter-spacing: -.05px; } .m5 { margin-left: 17px; } .m6 { margin-left: 16px; } .m7 { margin-left: 8px; white-space: nowrap; letter-spacing: -.1px; }

/* Edge */
.edge { left: 488px; width: 500px; height: 805px; border-radius: 12px; border: 1px solid #0a0a0a; box-shadow: 0 12px 30px 2px #0007; background: #3a3a3a; color: #ddd; font-size: 12px; padding: 0 4px 2px 0; }
.ed-tabs { height: 39px; margin-right: -4px; padding: 0 0 1px 19px; background: #2c2c2c; box-shadow: inset 0 1px #5b5b5b; display: flex; align-items: center; flex: none; }
.ed-tabs .light { margin-right: 8px; }
.ed-user { margin-left: 19px; } .ed-coll { margin-left: 20px; } .ed-side { margin-left: 20px; }
.ed-tab { margin: 0 0 -1px 19px; width: 207px; height: 34px; align-self: flex-end; border-radius: 8px 8px 0 0; background: #3a3a3a; display: flex; align-items: center; padding: 0 11px 7px 7px; color: #ccc; }
.ed-tab span { flex: 1; margin-left: 9px; letter-spacing: -.1px; }
.ed-plus { margin-left: 14px; color: #aaa; }
.ed-bar { height: 40px; flex: none; display: flex; align-items: center; }
.ed-arrow { margin-left: 24px; width: 10px; height: 1px; background: #999; }
.ed-url { margin-left: 20px; width: 303px; height: 32px; border-radius: 16px; border: 1px solid #6a6a6a; background: #292929; display: flex; align-items: center; padding-left: 16px; color: #8c8c8c; }
.ed-url svg:first-child { color: #eee; }
.ed-url .addr { margin-left: 14px; width: 142px; }
.ed-url .ez { margin-right: 25px; } .ed-url svg:last-child { margin-left: 22px; }
.ed-ext { margin-left: 20px; }
.ed-sep { margin-left: 16px; width: 1px; height: 16px; background: #666; } .ed-dots { margin-left: 17px; } .ed-cop { margin-left: 24px; }
.edge .page { border-radius: 0 8px 10px 10px; }

/* Firefox */
.firefox { left: 934px; width: 506px; height: 807px; border-radius: 12px; border-top: 1px solid #514f55; background: #2b2a33; color: #87858e; }
.ff-tabs { height: 43px; background: #1f1e25; display: flex; align-items: center; padding-left: 60px; flex: none; }
.ff-tabs .light { background: #45434a; margin-top: -1px; }
.ff-archive { margin-left: 52px; }
.ff-tab { position: relative; margin-left: 19px; width: 221px; height: 36px; border-radius: 4px; background: #42414d; display: flex; align-items: center; justify-content: space-between; padding: 2px 11px 0 8px; font-size: 11px; color: #aaa8b1; margin-top: -2px; }
.ff-tab::before { content: ""; position: absolute; left: -5px; top: -3px; width: 1px; height: 43px; background: #4b4952; }
.ff-plus { margin-left: 16px; } .ff-chev { margin-left: 71px; }
.ff-bar { height: 41px; border-bottom: 1px solid #111; display: flex; align-items: center; padding-left: 60px; flex: none; }
.ff-reload { margin-left: 22px; }
.ff-url { margin-left: 25px; width: 241px; height: 32px; border-radius: 4px; background: #1c1b22; display: flex; align-items: center; padding-left: 8px; }
.ff-page { margin-left: 14px; }
.ff-addr { margin-left: 11px; width: 156px; font-size: 14px; letter-spacing: -.3px; color: #96949c; white-space: nowrap; padding-top: 1px; }
.ff-addr b { font-weight: 500; color: #fff; }
.ff-ext { margin-left: 26px; } .ff-more { margin-left: 22px; } .ff-menu { margin-left: 23px; }
.firefox .page { background: #f2f8fc; }

/* Booking form */
.card { width: 320px; padding: 16px; background: #fff; border-radius: 8px; box-shadow: 0 0 12px #0000001a; font-family: "Liberation Sans", Arial, sans-serif; font-size: 13px; letter-spacing: -.08px; color: #000; }
.chrome .card { margin: -19px 0 0 99px; height: 730px; }
.edge .card { margin: 16px 0 0 88px; height: 693px; }
.firefox .card { margin: 6px 0 0 96px; height: 700px; }
.head { display: flex; justify-content: space-between; height: 32px; }
.btn { width: 32px; height: 32px; border-radius: 4px; background: #006eff; display: grid; place-items: center; }
.chrome .btn, .edge .btn { padding-bottom: 2px; }
.title { line-height: 33px; }
.firefox .title { line-height: 31px; }
.card label { display: block; height: 32px; line-height: 30px; font-weight: 700; color: #555; }
.card label.first { margin-top: 9px; }
.card label.sum { line-height: 28px; }
.card label.dlabel { height: 35px; line-height: 33px; }
.field { height: 33px; border: 1px solid #ccc; border-radius: 3px; padding: 0 8px; line-height: 32px; color: #757575; white-space: nowrap; }
.select { background: #f8f8f8; color: #000; display: flex; justify-content: space-between; align-items: center; }
.select i { border: 2px solid transparent; border-top-color: #999; border-bottom: 0; margin-right: 2px; }
.area { height: 48px; font-family: "DejaVu Sans Mono", monospace; letter-spacing: -.15px; }
.date { height: 34px; font-family: "DejaVu Sans Mono", monospace; font-size: 13.33px; letter-spacing: .05px; display: flex; justify-content: space-between; align-items: center; line-height: 34px; }
.date b { font-weight: 400; color: #000; }
.focus { outline: 1px solid #0b57d0; outline-offset: -1px; background: #fff; }
.legend { height: 30px; display: flex; line-height: 29px; }
.legend strong { color: #555; width: 127px; white-space: nowrap; }
.edge .legend strong { width: 128px; }
.firefox .legend strong { width: 129px; }
.legend i { width: 12px; height: 12px; margin-top: 10px; background: #ffc7c7; flex: none; }
.legend i.green { background: #c7ffcd; }
.legend span { margin-left: 7px; line-height: 34px; white-space: nowrap; letter-spacing: -.12px; }
.legend .lb { width: 57px; }
.edge .legend .lb, .firefox .legend .lb { width: 56px; }
.slots { display: flex; flex-direction: column; gap: 4px; margin: 0 4px; }
.slot { height: 37px; border: 1px solid #ccc; border-radius: 4px; background: #c7ffcd; padding: 0 8px; line-height: 31px; font-weight: 700; color: #555; display: flex; }
.slot i { width: 10px; height: 10px; margin: 9px 4px 0 0; border: 1px solid #767676; border-radius: 50%; background: #fff; }
.slot.booked { height: 33px; background: #ffc7c7; color: #000; font-weight: 400; }
.chrome .slot { padding-left: 7.500px; }
.submit { margin-top: 19px; height: 34px; border-radius: 3px; background: #006eff; color: #fff; text-align: center; line-height: 33px; }
.firefox .field { height: 34px; line-height: 33px; }
.firefox .area { height: 50px; line-height: 32px; }
.firefox .card label.first { height: 33px; }
.firefox .card label { line-height: 29px; }
.firefox .card label.dlabel { height: 33px; line-height: 29px; }
.firefox .legend { line-height: 27px; }
.firefox .legend span { line-height: 32px; }
.firefox .slot.booked + .booked { height: 34px; }
.firefox .slot i { width: 11px; height: 11px; margin-right: 3px; }
.firefox .slot.last { height: 38px; line-height: 33px; }
.firefox .slot.last i { margin-top: 10px; }
.firefox .date { padding: 0 11px; line-height: 32px; }
.firefox .date span { display: flex; letter-spacing: -.2px; }
.firefox .date b:nth-child(even) { width: 12px; text-align: center; }
.firefox .submit { height: 35px; line-height: 37px; }

/* Dock */
.dock { position: absolute; left: 45px; top: 830px; width: 1350px; height: 65px; border: 1px solid #39434f; border-radius: 18px; background: linear-gradient(90deg, #151c29, #101e33 40%, #101b2b); box-shadow: 0 0 45px #0000003d; display: flex; padding-left: 2px; }
.app { position: relative; width: 54px; height: 58px; display: grid; place-items: center; flex: none; }
.app.on::after { content: ""; position: absolute; left: 25px; top: 58px; width: 4px; height: 4px; border-radius: 50%; background: #8e98a6; }
.gear { padding-right: 2px; }
.dsep { width: 1px; height: 47px; margin-top: 8px; background: #4a5461; flex: none; }
.s1 { margin-left: 12px; } .zed { margin-left: 11px; } .s2 { margin-left: 12px; }
.mini { width: 54px; padding: 15px 0 0 15px; flex: none; }
.trash { padding: 7px 0 0 20px; }
.np { font: 700 4.400px "DejaVu Sans", sans-serif; letter-spacing: -.1px; }
.mar { font: 600 7.500px Inter, sans-serif; fill: #fff; }
.twenty { font: 300 24px Inter, sans-serif; fill: #333; letter-spacing: -1px; }
.tv { font: 400 18px Inter, sans-serif; letter-spacing: -.5px; fill: #fff; }
.w { color: #fff; }
```
